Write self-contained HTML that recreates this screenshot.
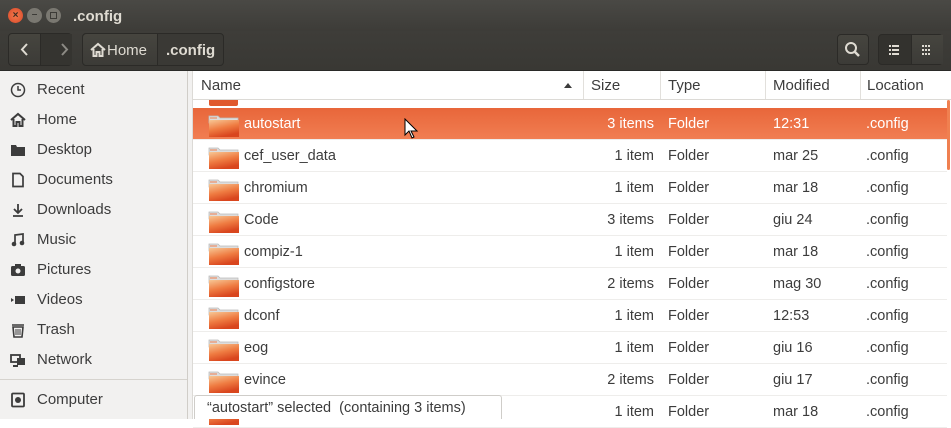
<!DOCTYPE html>
<html><head><style>
*{margin:0;padding:0;box-sizing:border-box}
body{width:951px;height:419px;overflow:hidden;font-family:"Liberation Sans",sans-serif;font-size:14.5px;color:#3c3c3c;background:#fff;position:relative}
.title{position:absolute;left:0;top:0;width:951px;height:31px;background:linear-gradient(#4a4945,#3d3c38);color:#dfdbd2;font-weight:bold;font-size:15px}
.tb{position:absolute;left:0;top:31px;width:951px;height:40px;background:linear-gradient(#3e3d39,#393834);border-bottom:1px solid #2a2a28}
.btn{position:absolute;border:1px solid #2b2a27;border-radius:4px;background:linear-gradient(#46453f,#3c3b37);color:#dfdbd2}
.side{position:absolute;left:0;top:71px;width:188px;height:348px;background:#f2f1f0;border-right:1px solid #d0cdc8}
.si{position:absolute;left:37px;font-size:15px;color:#3c3c3c}
.ic{position:absolute;left:10px;width:16px;height:16px}
.hdr{position:absolute;top:71px;left:193px;width:758px;height:29px;border-bottom:1px solid #dcdad6;background:#fff}
.hc{position:absolute;top:6px;font-size:15px;color:#3c3c3c}
.vs{position:absolute;top:0;width:1px;height:28px;background:#e2e0dc}
.row{position:absolute;left:193px;width:754px;height:32px;border-bottom:1px solid #eeedeb}
.row span{position:absolute;top:8px}
.sel{background:linear-gradient(#e8663a,#f17e52);color:#fff}
.fold{position:absolute;left:15px;top:6px;width:32px;height:24px}
</style></head><body>
<div class="title">
 <div style="position:absolute;left:8px;top:8px;width:15px;height:15px;border-radius:50%;background:radial-gradient(#f37a4b,#d9482a);color:#3c2a20;font-size:10px;text-align:center;line-height:15px">×</div>
 <div style="position:absolute;left:27px;top:8px;width:15px;height:15px;border-radius:50%;background:#7a7871;color:#3c3b37;font-size:10px;text-align:center;line-height:14px">–</div>
 <div style="position:absolute;left:46px;top:8px;width:15px;height:15px;border-radius:50%;background:#7a7871"><div style="margin:4px;width:7px;height:7px;border:1px solid #3c3b37"></div></div>
 <div style="position:absolute;left:73px;top:8px">.config</div>
</div>
<div class="tb">
 <div class="btn" style="left:8px;top:2px;width:64px;height:33px"><div style="position:absolute;left:31px;top:0;width:1px;height:31px;background:#2b2a27"></div><div style="position:absolute;left:32px;top:0;width:31px;height:31px;background:#353430"></div>
 <svg width="64" height="31" style="position:absolute;left:0;top:0"><path d="M18 10l-5 5.5 5 5.5" fill="none" stroke="#dfdbd2" stroke-width="2"/><path d="M53 10l5 5.5-5 5.5" fill="none" stroke="#8c8a84" stroke-width="2"/></svg></div>
 <div class="btn" style="left:82px;top:2px;width:142px;height:33px;background:#3a3935"><div style="position:absolute;left:0;top:0;width:75px;height:31px;background:linear-gradient(#46453f,#3c3b37);border-right:1px solid #2b2a27;border-radius:4px 0 0 4px"></div>
 <svg width="16" height="16" style="position:absolute;left:7px;top:8px"><path d="M1 8L8 2l7 6M3.5 7v7h3v-4h3v4h3V7" fill="none" stroke="#dfdbd2" stroke-width="2"/></svg>
 <span style="position:absolute;left:24px;top:8px;font-size:15px">Home</span>
 <span style="position:absolute;left:83px;top:8px;font-size:15px;font-weight:bold">.config</span></div>
 <div class="btn" style="left:837px;top:3px;width:32px;height:31px"><svg width="30" height="29"><circle cx="13" cy="13" r="5" fill="none" stroke="#dfdbd2" stroke-width="2"/><path d="M17 17l4 4" stroke="#dfdbd2" stroke-width="2.5"/></svg></div>
 <div class="btn" style="left:878px;top:3px;width:65px;height:31px;background:#33322e"><div style="position:absolute;left:32px;top:0;width:32px;height:29px;background:linear-gradient(#46453f,#3c3b37);border-left:1px solid #2b2a27"></div>
 <svg width="64" height="29" style="position:absolute;left:0;top:0"><g fill="#dfdbd2"><rect x="10" y="10" width="2" height="2"/><rect x="13" y="10" width="7" height="2"/><rect x="10" y="14" width="2" height="2"/><rect x="13" y="14" width="7" height="2"/><rect x="10" y="18" width="2" height="2"/><rect x="13" y="18" width="7" height="2"/>
 <rect x="43" y="10" width="2" height="2"/><rect x="46" y="10" width="2" height="2"/><rect x="49" y="10" width="2" height="2"/><rect x="43" y="14" width="2" height="2"/><rect x="46" y="14" width="2" height="2"/><rect x="49" y="14" width="2" height="2"/><rect x="43" y="18" width="2" height="2"/><rect x="46" y="18" width="2" height="2"/><rect x="49" y="18" width="2" height="2"/></g></svg></div>
</div>
<div class="side">
 <svg class="ic" style="top:11px"><circle cx="8" cy="8" r="6.5" fill="none" stroke="#3c3c3c" stroke-width="1.5"/><path d="M8 4v4h3" fill="none" stroke="#3c3c3c" stroke-width="1.5"/></svg><div class="si" style="top:10px">Recent</div>
 <svg class="ic" style="top:41px"><path d="M1 8L8 2l7 6M3.5 7v7h3v-4h3v4h3V7" fill="none" stroke="#3c3c3c" stroke-width="2"/></svg><div class="si" style="top:40px">Home</div>
 <svg class="ic" style="top:71px"><path d="M1 3h5l1 2h8v9H1z" fill="#3c3c3c"/></svg><div class="si" style="top:70px">Desktop</div>
 <svg class="ic" style="top:101px"><path d="M3 1.5h7l3 3v10H3z" fill="none" stroke="#3c3c3c" stroke-width="1.7"/></svg><div class="si" style="top:100px">Documents</div>
 <svg class="ic" style="top:131px"><path d="M8 2v9M4 7l4 4 4-4M3 14h10" fill="none" stroke="#3c3c3c" stroke-width="1.8"/></svg><div class="si" style="top:130px">Downloads</div>
 <svg class="ic" style="top:161px"><path d="M5 12V3l8-1v9" fill="none" stroke="#3c3c3c" stroke-width="1.7"/><circle cx="4" cy="12" r="2.3" fill="#3c3c3c"/><circle cx="12" cy="11" r="2.3" fill="#3c3c3c"/></svg><div class="si" style="top:160px">Music</div>
 <svg class="ic" style="top:191px"><rect x="1" y="4" width="14" height="10" rx="1.5" fill="#3c3c3c"/><rect x="5" y="2" width="6" height="3" fill="#3c3c3c"/><circle cx="8" cy="9" r="2.5" fill="#f2f1f0"/></svg><div class="si" style="top:190px">Pictures</div>
 <svg class="ic" style="top:221px"><rect x="5" y="4" width="10" height="8" fill="#3c3c3c"/><path d="M1 6l3 2-3 2z" fill="#3c3c3c"/></svg><div class="si" style="top:220px">Videos</div>
 <svg class="ic" style="top:251px"><path d="M2 3h12M3 5l1 10h8l1-10z" fill="none" stroke="#3c3c3c" stroke-width="1.6"/><path d="M6 7v6M8 7v6M10 7v6" stroke="#3c3c3c"/></svg><div class="si" style="top:250px">Trash</div>
 <svg class="ic" style="top:281px"><rect x="1" y="3" width="9" height="7" fill="none" stroke="#3c3c3c" stroke-width="1.8"/><rect x="7" y="6" width="8" height="7" fill="#3c3c3c"/><path d="M3 14h5" stroke="#3c3c3c" stroke-width="2"/></svg><div class="si" style="top:280px">Network</div>
 <div style="position:absolute;left:0;top:308px;width:187px;height:1px;background:#d6d3ce"></div>
 <svg class="ic" style="top:321px"><rect x="2" y="1.5" width="12" height="13" rx="1" fill="none" stroke="#3c3c3c" stroke-width="1.8"/><circle cx="8" cy="8" r="3" fill="#3c3c3c"/></svg><div class="si" style="top:320px">Computer</div>
</div>
<div style="position:absolute;left:188px;top:71px;width:5px;height:348px;background:#f2f1f0;border-right:1px solid #dcdad6"></div>
<div class="hdr">
 <span class="hc" style="left:8px">Name</span>
 <svg style="position:absolute;left:370px;top:10px" width="10" height="8"><path d="M1 7l4-5 4 5z" fill="#3c3c3c"/></svg>
 <div class="vs" style="left:390px"></div><span class="hc" style="left:398px">Size</span>
 <div class="vs" style="left:467px"></div><span class="hc" style="left:475px">Type</span>
 <div class="vs" style="left:572px"></div><span class="hc" style="left:580px">Modified</span>
 <div class="vs" style="left:667px"></div><span class="hc" style="left:674px">Location</span>
</div>
<div style="position:absolute;left:209px;top:100px;width:29px;height:6px;background:#e0582c;border-radius:0 0 2px 2px"></div>
<svg width="0" height="0" style="position:absolute"><defs><linearGradient id="fg" x1="0" y1="0" x2="0.4" y2="1"><stop offset="0" stop-color="#f7c896"/><stop offset="0.55" stop-color="#ef7c42"/><stop offset="1" stop-color="#d9461e"/></linearGradient></defs></svg>
<div id="rows"></div>
<script>
var d=[["autostart","3 items","12:31"],["cef_user_data","1 item","mar 25"],["chromium","1 item","mar 18"],["Code","3 items","giu 24"],["compiz-1","1 item","mar 18"],["configstore","2 items","mag 30"],["dconf","1 item","12:53"],["eog","1 item","giu 16"],["evince","2 items","giu 17"],["","1 item","mar 18"]];
var h="";d.forEach(function(r,i){var t=108+i*32;
h+='<div class="row'+(i==0?' sel':'')+'" style="top:'+t+'px"><svg class="fold" viewBox="0 0 32 24"><path d="M1 2h9l2 2h18v5H1z" fill="#ddd" stroke="#bbb" stroke-width=".8"/><path d="M2 4h7" stroke="#f08050"/><path d="M1 6h30v17H1z" fill="url(#fg)"/></svg><span style="left:51px">'+r[0]+'</span><span style="right:'+(754-461)+'px">'+r[1]+'</span><span style="left:475px">Folder</span><span style="left:580px">'+r[2]+'</span><span style="left:673px">.config</span></div>';});
document.getElementById("rows").innerHTML=h;
</script>
<div style="position:absolute;left:947px;top:100px;width:3px;height:70px;background:#f08050;border-radius:2px"></div>
<svg style="position:absolute;left:404px;top:118px" width="14" height="22"><path d="M1 1v16l4-4 3 7 2-1-3-6h6z" fill="#fff" stroke="#000" stroke-width="1"/></svg>
<div style="position:absolute;left:194px;top:395px;width:308px;height:24px;background:#fff;border:1px solid #cfcdc9;border-bottom:none;border-radius:3px 3px 0 0;padding:4px 0 0 12px;font-size:14.5px;white-space:pre">“autostart” selected  (containing 3 items)</div>
</body></html>
